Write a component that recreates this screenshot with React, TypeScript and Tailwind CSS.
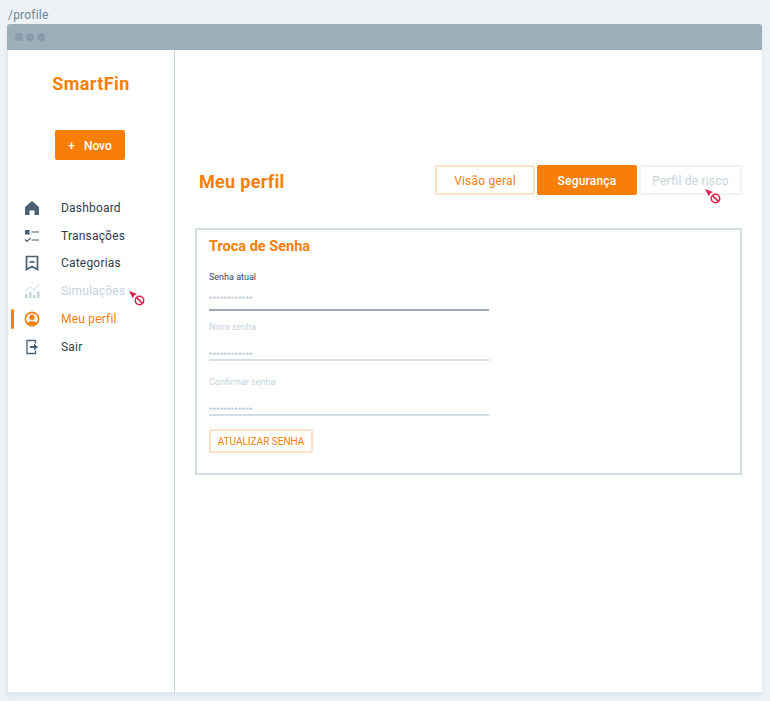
import type { ReactNode } from "react";

function BlockedCursor({ className }: { className: string }) {
  return (
    <svg className={className} width="18" height="17" viewBox="0 0 18 17" fill="none">
      <path d="M1 1 L9 4 L6 5.5 L5 8.5 Z" fill="#e11d48" />
      <circle cx="11.5" cy="10.5" r="4.2" stroke="#e11d48" strokeWidth="1.5" fill="#fff" />
      <path d="M8.6 7.6 L14.4 13.4" stroke="#e11d48" strokeWidth="1.5" />
    </svg>
  );
}

const icons: Record<string, ReactNode> = {
  home: <path d="M8 1 L15 7 V15 H10.5 V10.5 H5.5 V15 H1 V7 Z" fill="currentColor" />,
  list: (
    <g stroke="currentColor" strokeWidth="1.2" fill="none">
      <rect x="1" y="2" width="4.5" height="4.5" fill="currentColor" stroke="none" />
      <path d="M7.5 4 H15 M7.5 12 H15 M1 11.5 L3 13.5 L6.5 10" />
    </g>
  ),
  bookmark: (
    <g stroke="currentColor" strokeWidth="1.7" fill="none">
      <path d="M2.5 1.5 H13.5 V14.5 L8 11.5 L2.5 14.5 Z" />
      <path d="M5.5 7 H10.5" />
    </g>
  ),
  chart: (
    <g fill="currentColor">
      <rect x="1" y="11" width="2.5" height="4" />
      <rect x="5" y="9" width="2.5" height="6" />
      <rect x="9" y="12" width="2.5" height="3" />
      <rect x="13" y="8.5" width="2.5" height="6.5" />
      <path d="M1 8 L6 3.5 L10 7 L15.5 1.5" stroke="currentColor" strokeWidth="0.9" fill="none" />
    </g>
  ),
  user: (
    <g>
      <circle cx="8" cy="8" r="6.6" stroke="currentColor" strokeWidth="1.6" fill="none" />
      <circle cx="8" cy="6.3" r="2.7" fill="currentColor" />
      <path d="M3.4 12 C4.5 9.6 11.5 9.6 12.6 12 C11 14.6 5 14.6 3.4 12 Z" fill="currentColor" />
    </g>
  ),
  exit: (
    <g>
      <path d="M11.5 4.5 V1.5 H3 V14.5 H11.5 V11.5" stroke="currentColor" strokeWidth="1.3" fill="none" />
      <path d="M6 7 H10 V4.5 L14 8 L10 11.5 V9 H6 Z" fill="currentColor" />
    </g>
  ),
};

const navItems = [
  { label: "Dashboard", icon: "home", iconColor: "text-[#4a6074]", textColor: "text-[#2c3e50]" },
  { label: "Transações", icon: "list", iconColor: "text-[#4a6074]", textColor: "text-[#2c3e50]" },
  { label: "Categorias", icon: "bookmark", iconColor: "text-[#4a6074]", textColor: "text-[#2c3e50]" },
  { label: "Simulações", icon: "chart", iconColor: "text-[#c6d3de]", textColor: "text-[#c6d3de]", blocked: true },
  { label: "Meu perfil", icon: "user", iconColor: "text-[#f77f08]", textColor: "text-[#f77f08]", active: true },
  { label: "Sair", icon: "exit", iconColor: "text-[#4a6074]", textColor: "text-[#2c3e50]" },
];

const fields = [
  { label: "Senha atual", labelColor: "text-[#34495e]", line: "border-[#9daab6]", mt: "mt-0", dots: "mb-[5px]" },
  { label: "Nova senha", labelColor: "text-[#c6d3de]", line: "border-[#d3dde6]", mt: "mt-[10px]", dots: "mb-[-1px]" },
  { label: "Confirmar senha", labelColor: "text-[#c6d3de]", line: "border-[#d3dde6]", mt: "mt-[15px]", dots: "mb-[-1px]" },
];

function Sidebar() {
  return (
    <aside className="w-[167px] shrink-0 border-r border-[#c3d3dd] flex flex-col">
      <div className="mt-[23px] text-center text-[18px] leading-[22px] font-bold tracking-[0.4px] text-[#f77f08]">SmartFin</div>
      <button className="mt-[35px] ml-[47px] w-[70px] h-[30px] pt-[1px] rounded-[2px] bg-[#f77f08] text-white text-[12px] font-medium flex items-center justify-center gap-[9px]">
        <span>+</span>
        <span>Novo</span>
      </button>
      <nav className="mt-[34px] flex flex-col">
        {navItems.map((item) => (
          <div key={item.label} className="relative h-[27.8px] flex items-center pl-[16px]">
            {item.active && <div className="absolute left-[3px] top-[4px] w-[3px] h-[20px] rounded-[2px] bg-[#f77f08]" />}
            <svg width="16" height="16" viewBox="0 0 16 16" className={item.iconColor}>
              {icons[item.icon]}
            </svg>
            <span className={`ml-[21px] text-[12px] tracking-[0.2px] ${item.textColor}`}>{item.label}</span>
            {item.blocked && <BlockedCursor className="absolute left-[120px] top-[13px]" />}
          </div>
        ))}
      </nav>
    </aside>
  );
}

function PasswordCard() {
  return (
    <section className="mt-[33px] w-[547px] h-[247px] border-2 border-[#d3dde6] px-[12px] pt-[7px]">
      <h2 className="text-[14.5px] leading-[20px] font-bold text-[#f77f08]">Troca de Senha</h2>
      <div className="mt-[14px] flex flex-col">
        {fields.map((f) => (
          <div key={f.label} className={`${f.mt} w-[280px] border-b-2 ${f.line} h-[40px] flex flex-col justify-between`}>
            <label className={`text-[9px] leading-[12px] ${f.labelColor}`}>{f.label}</label>
            <span className={`text-[8px] leading-[10px] tracking-[0.2px] ${f.dots} text-[#b5c3cf]`}>************</span>
          </div>
        ))}
      </div>
      <button className="mt-[13px] block w-[104px] h-[24px] rounded-[2px] border-2 border-[#fde0c8] text-[10px] text-[#f77f08]">
        ATUALIZAR SENHA
      </button>
    </section>
  );
}

function Header() {
  return (
    <div className="mt-[115px] flex items-center justify-between pl-[4px]">
      <h1 className="pt-[2px] text-[18px] font-bold tracking-[0.3px] text-[#f77f08]">Meu perfil</h1>
      <div className="flex gap-[2px]">
        <button className="w-[100px] h-[30px] pt-[1px] rounded-[2px] border-2 border-[#fde0c8] text-[12px] font-normal tracking-[0.2px] text-[#f77f08]">
          Visão geral
        </button>
        <button className="w-[100px] h-[30px] pt-[1px] rounded-[2px] bg-[#f77f08] text-[12px] font-medium tracking-[0.2px] text-white">
          Segurança
        </button>
        <div className="relative">
          <button className="w-[103px] h-[30px] pt-[1px] rounded-[2px] border-2 border-[#f0f3f6] text-[12px] font-normal tracking-[0.2px] text-[#c9d3dc]">
            Perfil de risco
          </button>
          <BlockedCursor className="absolute left-[65px] top-[23px]" />
        </div>
      </div>
    </div>
  );
}

export default function App() {
  return (
    <div className="w-[770px] h-[701px] bg-[#edf2f6] font-['Roboto',sans-serif] overflow-hidden flex flex-col pl-[7px] pr-[8px]">
      <div className="h-[24px] pl-[1px] pt-[7px] text-[12px] leading-[17px] tracking-[0.2px] text-[#6f8494]">/profile</div>
      <div className="h-[670px] flex flex-col bg-white rounded-t-[3px] overflow-hidden border-b-2 border-[#dfe6ec] shadow-[0_2px_4px_rgba(180,195,205,0.25)]">
        <div className="h-[26px] shrink-0 bg-[#9daebb] flex items-center gap-[3px] pl-[8px]">
          <span className="w-[8px] h-[8px] rounded-full bg-[#8a9cab]" />
          <span className="w-[8px] h-[8px] rounded-full bg-[#8a9cab]" />
          <span className="w-[8px] h-[8px] rounded-full bg-[#8a9cab]" />
        </div>
        <div className="flex-1 flex border-l border-[#dfe6ec]">
          <Sidebar />
          <main className="flex-1 pl-[20px] pr-[20px]">
            <Header />
            <PasswordCard />
          </main>
        </div>
      </div>
    </div>
  );
}
